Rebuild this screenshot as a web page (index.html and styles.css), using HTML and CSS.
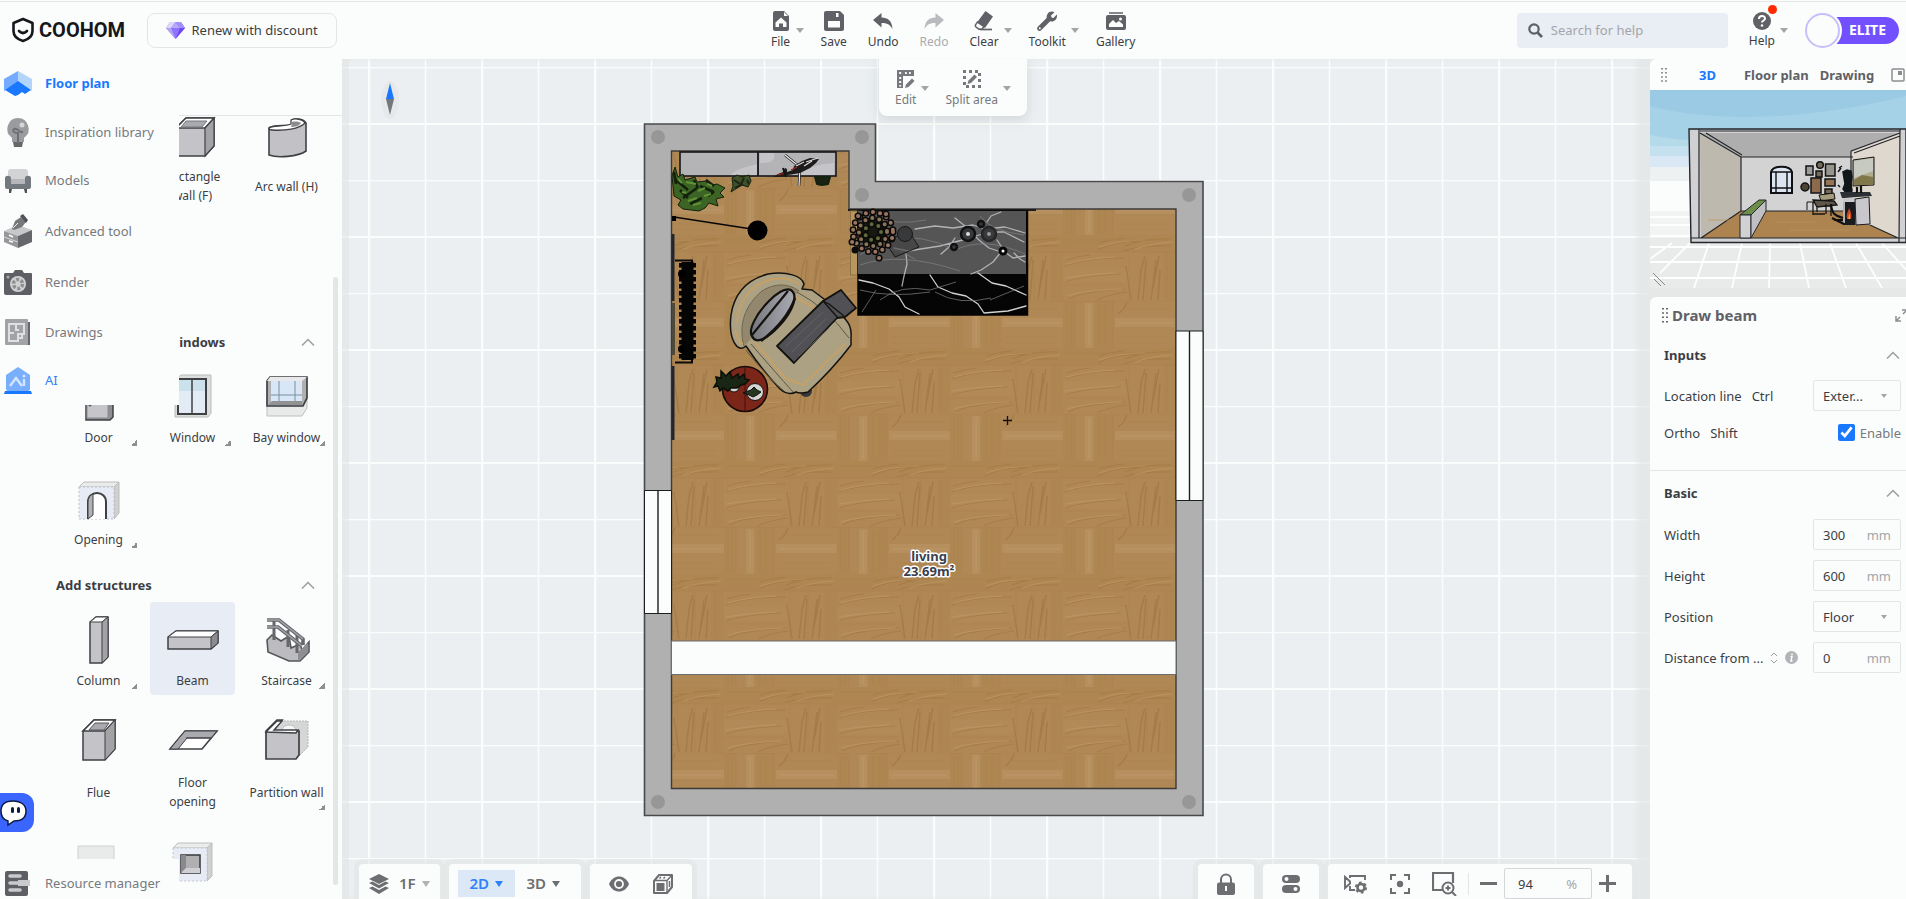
FILE: index.html
```html
<!DOCTYPE html>
<html lang="en">
<head>
<meta charset="utf-8">
<title>Coohom</title>
<link rel="stylesheet" href="styles.css">
</head>
<body>
<div class="app">
  <header class="topbar">
    <div class="topbar-left">
      <a class="brand" href="#">
        <svg width="24" height="26" viewBox="0 0 24 26"><path d="M12 2 L21.500 6 V14 C21.500 19 17 22.500 12 24 C7 22.500 2.500 19 2.500 14 V6 Z" fill="none" stroke="#16171b" stroke-width="2.600" stroke-linejoin="round"/><path d="M8 14 Q12 18 16 14" fill="none" stroke="#16171b" stroke-width="2.600" stroke-linecap="round"/></svg>
        <span>COOHOM</span>
      </a>
      <button class="renew" type="button">
        <svg width="19" height="17" viewBox="0 0 19 17"><path d="M4 0h11l4 6-9.500 11L0 6z" fill="#8f74ff"/><path d="M4 0h5.500L5 6H0z" fill="#dcd9fb"/><path d="M9.500 0L14 6H5z" fill="#b7a8fb"/><path d="M15 0l4 6h-5L9.500 0z" fill="#a48fff"/><path d="M0 6h5l4.500 11z" fill="#b3a5ee"/><path d="M19 6h-5L9.500 17z" fill="#6f45f4"/></svg>
        Renew with discount
      </button>
    </div>
    <nav class="toolbar" aria-label="Main tools">
      <button class="tool has-caret" type="button"><span class="tool-body"><svg width="20" height="20" viewBox="0 0 20 20"><path d="M4 0h9l5 5v13a2 2 0 0 1-2 2H4a2 2 0 0 1-2-2V2a2 2 0 0 1 2-2z" fill="#606167"/><path d="M13 1v4h4z" fill="#fbfdfc"/><path d="M10 6.500l5.500 5V16h-3.500v-3.500H8V16H4.500v-4.500z" fill="#fbfdfc"/></svg><span>File</span></span></button>
      <button class="tool" type="button"><span class="tool-body"><svg width="20" height="20" viewBox="0 0 20 20"><path d="M2 0h14l4 4v14a2 2 0 0 1-2 2H2a2 2 0 0 1-2-2V2a2 2 0 0 1 2-2z" fill="#606167"/><path d="M4 10h12v6.500H4zM12 2h2.500v4H12z" fill="#fbfdfc"/></svg><span>Save</span></span></button>
      <button class="tool" type="button"><span class="tool-body"><svg width="20" height="20" viewBox="0 0 20 20"><path d="M0 9l8.500-7v4.500C15 6.500 19 10 19.500 18 17 13.500 14 12 8.500 12v4.500z" fill="#606167"/></svg><span>Undo</span></span></button>
      <button class="tool" type="button" disabled><span class="tool-body"><svg width="20" height="20" viewBox="0 0 20 20"><path d="M20 9l-8.500-7v4.500C5 6.500 1 10 .500 18 3 13.500 6 12 11.500 12v4.500z" fill="#b9bbc1"/></svg><span>Redo</span></span></button>
      <button class="tool has-caret" type="button"><span class="tool-body"><svg width="20" height="20" viewBox="0 0 20 20"><path d="M11.500 0l7.500 5.500-8 11.500-8-5.500z" fill="#606167"/><path d="M3.500 11l6.500 4.500-2 2.700H5L2 16c-.800-.700-.800-1.500-.300-2.300z" fill="none" stroke="#606167" stroke-width="1.500"/><path d="M6 18.500h12" stroke="#606167" stroke-width="1.700"/></svg><span>Clear</span></span></button>
      <button class="tool has-caret" type="button"><span class="tool-body"><svg width="20" height="20" viewBox="0 0 20 20"><path d="M2.500 17.500L12 8" stroke="#606167" stroke-width="4.600" stroke-linecap="round"/><path d="M17.500 1.200L14 4.500l.500 2 2 .500 3.300-3.500c1 4-2 7.500-5.800 7C10 10 8.500 6 10.500 3 12 .500 15 0 17.500 1.200z" fill="#606167"/><circle cx="2.800" cy="17.200" r="1" fill="#fbfdfc"/></svg><span>Toolkit</span></span></button>
      <button class="tool" type="button"><span class="tool-body"><svg width="20" height="20" viewBox="0 0 20 20"><path d="M3 2h14" stroke="#606167" stroke-width="1.500"/><rect y="4" width="20" height="15" rx="2" fill="#606167"/><path d="M3 16v-3l4-4 3 3 3-2 4 3.500V16z" fill="#fbfdfc"/><circle cx="14.500" cy="8" r="1.500" fill="#fbfdfc"/></svg><span>Gallery</span></span></button>
      <div class="subtools">
        <button class="tool has-caret" type="button"><span class="tool-body"><svg width="20" height="20" viewBox="0 0 20 20"><path d="M1 1h17v6H7v12H1z" fill="#77787d"/><path d="M9 3h1.800v2H9zM13 3h1.800v2H13zM3.200 3h2v2h-2zM3.200 8h2v2h-2zM3.200 12h2v2h-2zM3.200 16h2v1.500h-2z" fill="#fbfdfc"/><path d="M9 19l1-3.500 6-6 2.500 2.500-6 6z" fill="#77787d"/></svg><span>Edit</span></span></button>
        <button class="tool has-caret" type="button"><span class="tool-body"><svg width="20" height="20" viewBox="0 0 20 20"><rect x="2.500" y="2.500" width="15" height="15" fill="none" stroke="#77787d" stroke-width="3" stroke-dasharray="3 3" stroke-dashoffset="1.500"/><path d="M5.500 15l1-3.500 6-6L15 8l-6 6z" fill="#77787d"/></svg><span>Split area</span></span></button>
      </div>
    </nav>
    <div class="topbar-right">
      <label class="search">
        <svg width="15" height="15" viewBox="0 0 15 15"><circle cx="6" cy="6" r="4.700" fill="none" stroke="#5f6067" stroke-width="2.200"/><path d="M9.500 9.500L14 14" stroke="#5f6067" stroke-width="2.600"/></svg>
        <input type="search" placeholder="Search for help" aria-label="Search for help">
      </label>
      <button class="tool has-caret help" type="button"><span class="tool-body"><svg width="20" height="20" viewBox="0 0 20 20"><circle cx="10" cy="11" r="9" fill="#606167"/><path d="M7 9c0-4 6-4 6-.500 0 2-3 2-3 4" fill="none" stroke="#fff" stroke-width="2"/><circle cx="10" cy="15.500" r="1.200" fill="#fff"/></svg><span>Help</span></span><i class="dot"></i></button>
      <a class="account" href="#"><span class="avatar"></span><span class="plan-badge">ELITE</span></a>
    </div>
  </header>

  <main class="workspace">
    <aside class="sidebar">
      <div class="palette-head"></div>
      <div class="palette">
        <section class="group group-walls">
          <div class="tiles">
            <button class="tile slot-2" type="button"><svg width="60" height="48" viewBox="0 -1 60 48"><path d="M13 15L23 5h28v28l-9 10H13z" fill="#c4c4c8" stroke="#3f4044" stroke-width="1.500"/><path d="M13 15L23 5h28l-9 10z" fill="#fff" stroke="#3f4044" stroke-width="1.500"/><path d="M18 14l5-6h21l-5 6z" fill="#a9a9af" stroke="#77787d"/><path d="M42 15l9-10v28l-9 10z" fill="#a3a3a6" stroke="#3f4044" stroke-width="1.200"/></svg><span>Rectangle wall (F)</span></button>
            <button class="tile slot-3" type="button"><svg width="60" height="48" viewBox="0 -2 60 48"><path d="M12 14c2-3 15-2 23-3V6c4-2 12-1 14 3v28c-8 6-29 7-37 4z" fill="#c2c2c6" stroke="#3f4044" stroke-width="1.600"/><path d="M12 14c2-3 15-1 22-4V6c4-2 12-1 14 3-6 6-20 8-33 7-2 0-3-1-3-2z" fill="#fff" stroke="#3f4044" stroke-width="1.300"/><path d="M35 10v-2c4-1 8 0 9 1-2 3-6 4-10 4z" fill="#8b8b90"/></svg><span>Arc wall (H)</span></button>
          </div>
        </section>
        <section class="group">
          <h2 class="shifted">windows<svg width="14" height="8" viewBox="0 0 14 8"><path d="M1 7.500L7 1.500l6 6" fill="none" stroke="#9d9ea1" stroke-width="1.500"/></svg></h2>
          <div class="tiles">
            <button class="tile more" type="button"><svg width="60" height="48" viewBox="0 -5 60 48"><path d="M17 4h27v35l-3 3H17z" fill="#8f8f93" stroke="#3f4044" stroke-width="1.500"/><rect x="18" y="6" width="21" height="34" fill="#c6c6ca" stroke="#8b8c90"/><circle cx="21" cy="27" r="1.500" fill="#55565a"/></svg><span>Door</span></button>
            <button class="tile more" type="button"><svg width="60" height="48" viewBox="0 -5 60 48"><path d="M12 2l6-5h30v38l-3 4H12z" fill="#dcdddd" stroke="#b9b9bb"/><rect x="15" y="1" width="28" height="35" fill="#cbe2ec" stroke="#3f4044" stroke-width="2"/><path d="M16 13h26v22H16z" fill="#e3ebf4"/><path d="M29 1v35" stroke="#3f4044" stroke-width="1.500"/></svg><span>Window</span></button>
            <button class="tile more" type="button"><svg width="60" height="48" viewBox="0 -5 60 48"><path d="M10 28h34l6-8v10l-5 8H10z" fill="#e8e9e9" stroke="#bebebf"/><path d="M10 3l3-4h37v21l-4 8H10z" fill="#b0b0b3" stroke="#3f4044" stroke-width="1.700"/><path d="M10 3l3-4h37l-5 4z" fill="#e8e8ea"/><rect x="14" y="3" width="31" height="21" fill="#d9e6f5"/><path d="M22 3v21M38 3v21M14 17h31" stroke="#7591a0"/><path d="M11 27l4-4h30v4z" fill="#929295"/></svg><span>Bay window</span></button>
            <button class="tile more" type="button"><svg width="60" height="48" viewBox="0 -4 60 48"><path d="M10 8l5-5h35l-5 5z" fill="#eaebeb" stroke="#bcbcbd"/><path d="M45 8l5-5v31l-5 6z" fill="#cfd0d1" stroke="#bcbcbd"/><rect x="10" y="8" width="35" height="32" fill="#e7ebf5" stroke="#bcc0c4" stroke-dasharray="2 2"/><path d="M19 40V23c0-12 18-12 18 0v17" fill="#fff" stroke="#3f4044" stroke-width="2"/><path d="M19 40V23c0-4 2-7 5-8v21z" fill="#b2b2b4" stroke="#3f4044"/></svg><span>Opening</span></button>
          </div>
        </section>
        <section class="group">
          <h2>Add structures<svg width="14" height="8" viewBox="0 0 14 8"><path d="M1 7.500L7 1.500l6 6" fill="none" stroke="#9d9ea1" stroke-width="1.500"/></svg></h2>
          <div class="tiles">
            <button class="tile more" type="button"><svg width="60" height="48" viewBox="0 0 60 48"><path d="M21 6l6-5h12v40l-6 6H21z" fill="#c4c4c8" stroke="#3f4044" stroke-width="1.500"/><path d="M21 6l6-5h12l-6 5z" fill="#fff" stroke="#3f4044"/><path d="M33 6l6-5v40l-6 6z" fill="#a3a3a6" stroke="#3f4044"/></svg><span>Column</span></button>
            <button class="tile selected" type="button"><svg width="60" height="48" viewBox="0 0 60 48"><path d="M5 21l8-6h42v12l-7 6H5z" fill="#c4c4c8" stroke="#3f4044" stroke-width="1.500"/><path d="M5 21l8-6h42l-7 6z" fill="#fff" stroke="#3f4044"/><path d="M48 21l7-6v12l-7 6z" fill="#8c8c90" stroke="#3f4044"/></svg><span>Beam</span></button>
            <button class="tile more" type="button"><svg width="60" height="48" viewBox="0 0 60 48"><path d="M10 24l5-5 9 6 8-5 2 12 9-4 2 6 7-8v10l-9 9H32L11 36z" fill="#bcbcc0" stroke="#55565a" stroke-width="1.600"/><path d="M41 45l10-9V27l-10 9z" fill="#8e8e92"/><path d="M17 4v20M40 19v18M31 14v17" stroke="#66676b" stroke-width="3"/><path d="M10 4h12l24 19v6M10 11h11l24 19" fill="none" stroke="#66676b" stroke-width="3.600"/><path d="M10 4h12l24 19M10 11h11l24 19" fill="none" stroke="#a5a5a9" stroke-width="1.400"/></svg><span>Staircase</span></button>
            <button class="tile" type="button"><svg width="60" height="48" viewBox="0 -1 60 48"><path d="M14 12L25 1h21v29L36 41H14z" fill="#c4c4c8" stroke="#3f4044" stroke-width="1.500"/><path d="M14 12L25 1h21L36 12z" fill="#fff" stroke="#3f4044" stroke-width="1.500"/><path d="M20 11l6-7h14l-5 7z" fill="#a9a9af" stroke="#55565a"/><path d="M36 12L46 1v29L36 41z" fill="#a3a3a6" stroke="#3f4044"/></svg><span>Flue</span></button>
            <button class="tile" type="button"><svg width="60" height="48" viewBox="0 -1 60 48"><path d="M7 30L22 12h32L39 30z" fill="#fff" stroke="#3f4044" stroke-width="1.600"/><path d="M22 12h32l-6 7H24l-9 11H7z" fill="#a9a9af" stroke="#3f4044"/><path d="M23 19h26" stroke="#3f4044"/></svg><span>Floor opening</span></button>
            <button class="tile more" type="button"><svg width="60" height="48" viewBox="0 -1 60 48"><path d="M24 2h27v26l-9 9V12H18z" fill="#d5d6d6" stroke="#b6b6b8" stroke-dasharray="2 1"/><path d="M25 12c0-8 14-8 14 0" fill="#f4f5f5" stroke="#bbb"/><path d="M9 12L20 1h5l-9 11h26v24l-3 4H9z" fill="#c4c4c8" stroke="#3f4044" stroke-width="1.700"/><path d="M9 13L20 2h5l-8 9h24l-2 3z" fill="#fff" stroke="#3f4044" stroke-width="1.400"/></svg><span>Partition wall</span></button>
            <button class="tile" type="button" aria-label="Niche"><svg width="60" height="48" viewBox="0 6 60 48"><rect x="9" y="13" width="36" height="26" fill="#e9ebeb" stroke="#cfd0d0"/></svg></button>
            <button class="tile" type="button" aria-label="Wall niche"><svg width="60" height="48" viewBox="0 5 60 48"><path d="M10 14l5-5h34l-5 5z" fill="#eaebeb" stroke="#bcbcbd"/><path d="M44 14l5-5v33l-5 5z" fill="#cfd0d1" stroke="#bcbcbd"/><rect x="10" y="14" width="34" height="33" fill="#e7ebf5" stroke="#c4c8cc" stroke-dasharray="2 2"/><rect x="18" y="21" width="19" height="18" fill="#b0b0b2" stroke="#3f4044" stroke-width="1.600"/><path d="M18 21l5 0v13l-5 5z" fill="#8a8a8e"/><path d="M18 39l5-5h14v5z" fill="#cfcfd3"/></svg></button>
          </div>
        </section>
      </div>
      <i class="scrollbar"></i>
      <nav class="menu" aria-label="Modules">
        <a class="active" href="#"><svg width="28" height="28" viewBox="0 0 28 28"><path d="M0 10L14 2v12L0 22z" fill="#73acff"/><path d="M28 10L14 2v12l14 8z" fill="#b3d5fb"/><path d="M1 21l13-9 13 9-6 4-3-2-4 3-3 1z" fill="#1a78ff"/></svg>Floor plan</a>
        <a href="#"><svg width="28" height="30" viewBox="0 0 28 30"><path d="M9 25h10l-1 5h-8z" fill="#66676b"/><path d="M14 1a11 11 0 0 1 6 20v4H8v-4A11 11 0 0 1 14 1z" fill="#9a9b9e"/><path d="M14 26V16c-6 0-6-5-2-4 3 0 2 4 7 3" fill="none" stroke="#6e6f73" stroke-width="2"/><circle cx="18" cy="8" r="2.500" fill="#d5d6d7"/></svg>Inspiration library</a>
        <a href="#"><svg width="28" height="28" viewBox="0 0 28 28"><rect x="4" y="3" width="20" height="14" rx="3" fill="#d2d3d5"/><path d="M1 12c0-3 6-3 6 0v5h14v-5c0-3 6-3 6 0v9a2 2 0 0 1-2 2H3a2 2 0 0 1-2-2z" fill="#747980"/><path d="M7 13h14v5H7z" fill="#b4b7bb"/><path d="M5 23h3l-1 4H5zM20 23h3v4h-2z" fill="#4f5156"/></svg>Models</a>
        <a href="#"><svg width="28" height="34" viewBox="0 0 28 34"><path d="M0 17l14-6 14 5-14 6z" fill="#c7c8ca"/><path d="M0 17l14 5v12L0 28z" fill="#96979a"/><path d="M28 16l-14 6v12l14-6z" fill="#66676b"/><path d="M0 23l14 5" stroke="#d4d5d6"/><path d="M5 21l4 2M5 27l4 1" stroke="#fff" stroke-width="1.500"/><path d="M8 15l3-8 6-4 5 5-4 5-8 3z" fill="#77787c"/><path d="M16 2l3-2 5 6-2 3z" fill="#505156"/><path d="M9 14l5-5" stroke="#eee"/></svg>Advanced tool</a>
        <a href="#"><svg width="28" height="28" viewBox="0 0 28 28"><path d="M1 5h8l2-3h7l2 3h7a1 1 0 0 1 1 1v19a2 2 0 0 1-2 2H2a2 2 0 0 1-2-2V6z" fill="#5e5f64"/><circle cx="14" cy="16" r="8" fill="#d0d1d2"/><circle cx="14" cy="16" r="4.500" fill="none" stroke="#8e8f92" stroke-width="3.500" stroke-dasharray="3 1.700"/><circle cx="4" cy="9" r="1.500" fill="#aaa"/></svg>Render</a>
        <a href="#"><svg width="28" height="28" viewBox="0 0 28 28"><path d="M4 4h22v23H4z" fill="#66676b"/><rect x="1" y="1" width="23" height="26" rx="1" fill="#a2a3a6"/><path d="M5 6h15v10h-6v7H5zM5 15h5M12 6v6h3M14 20h4v-4" fill="none" stroke="#dfe0e1" stroke-width="2"/></svg>Drawings</a>
        <a class="accent" href="#"><svg width="28" height="28" viewBox="0 0 28 28"><path d="M2 9L14 1l12 8v14a2 2 0 0 1-2 2H4a2 2 0 0 1-2-2z" fill="#78aefc"/><path d="M1 25h26l1 3H0z" fill="#1a78ff"/><path d="M6 20l6-8 6 8M20 13v7" fill="none" stroke="#d4e6fd" stroke-width="2.400"/><circle cx="20" cy="10" r="1.500" fill="#d4e6fd"/></svg>AI</a>
      </nav>
      <a class="resource" href="#"><svg width="28" height="26" viewBox="0 0 28 26"><rect x="1" y="1" width="23" height="25" rx="2" fill="#5e5f64"/><path d="M6 6h10M6 13h16M6 20h10" stroke="#c9cacc" stroke-width="3.500" stroke-linecap="round"/><path d="M14 10h12v6H14z" fill="#c9cacc"/></svg>Resource manager</a>
      <button class="chat" type="button" aria-label="Chat"><svg width="34" height="39" viewBox="0 0 34 39"><path d="M13 8C5 8 1 12 1 18s3 9 7 10v4l6-4c8 0 12-4 12-10S21 8 13 8z" fill="#fff" stroke="#0e1b44" stroke-width="1.500"/><rect x="11" y="14" width="3" height="6" rx="1.500" fill="#0e1b44"/><rect x="17" y="14" width="3" height="6" rx="1.500" fill="#0e1b44"/></svg></button>
    </aside>

    <section class="canvas" aria-label="Floor plan canvas">
      <svg class="stage" viewBox="342 59 1308 840" preserveAspectRatio="xMinYMin slice">
        <defs>
          <pattern id="grid" x="368" y="67" width="113" height="113" patternUnits="userSpaceOnUse">
            <path d="M0 .500H113M57.500 0V113" stroke="#fbfdfc" stroke-width="1.500"/><path d="M0 57H113" stroke="#fbfdfc" stroke-width="2"/><path d="M1 0V113" stroke="#fbfdfc" stroke-width="2.500"/>
          </pattern>
          <pattern id="wood" x="724" y="527" width="113" height="113" patternUnits="userSpaceOnUse">
            <rect width="113" height="113" fill="#b08855"/>
            <path d="M0 0h12v47H0zM32 0h18v47H32zM0 47h113v17H0zM100 64h13v49h-13z" fill="#ae8652"/>
            <path d="M22 2h8v45h-8zM52 17h61v9H52z" fill="#b58f5e"/>
            <path d="M0 80h66v14H0z" fill="#b18a57"/>
            <g opacity=".4" fill="none">
            <path d="M0 .500h113M50 0v47M12 0v47M0 64h113M66 64v49M84 64v49M0 97h60" stroke="#a67d49" stroke-width=".800"/>
            <path d="M35 62q14-8 40-9M62 58q18-8 46-7M36 55q12-4 26-5M60 63q18-6 48-5M2 78q22-8 60-8M3 72q12-4 24-5M2 94q18-6 56-8M5 111q14-7 32-8M34 112q12-6 30-8M20 106q20-4 42-5" stroke="#976c35" stroke-width="1.200"/>
            <path d="M36 59q20-7 46-7M72 61q18-6 38-7M4 76q20-6 48-7M4 108q20-6 55-7M2 90q24-4 50-5M56 22h54M26 4v40" stroke="#c7a374" stroke-width="1.200"/>
            <path d="M68 112l-5-34M75 112l3-30 4-14M80 112l3-40M88 112l5-40M95 112l2-30M90 100l6-32M55 13q6-4 9-12" stroke="#936830" stroke-width="1.500"/>
            <path d="M4 2v44M8 4v40M36 3v42M42 3v40M104 66v44M56 36h50M54 42h50M60 8h48M2 52h104" stroke="#a2773f" stroke-width=".800"/>
            </g>
          </pattern>
          <linearGradient id="pillow" x1="0" x2="1"><stop offset="0" stop-color="#77787d"/><stop offset="1" stop-color="#aaabb2"/></linearGradient>
        </defs>
        <rect x="342" y="59" width="1308" height="840" fill="#ebeff1"/>
        <rect x="342" y="59" width="1308" height="840" fill="url(#grid)"/>
        <ellipse cx="390" cy="100" rx="9" ry="19" fill="#e6e9ea"/><path d="M390 83l4 16h-8z" fill="#1a78ff"/><path d="M390 115l4-16h-8z" fill="#74777c"/>

        <path d="M644.500 124H875.500V181.500H1203V815.500H644.500z" fill="#b0b0b0" stroke="#47494c" stroke-width="1.600"/>
        <path d="M671.500 151H849V209H1176V788.500H671.500z" fill="url(#wood)" stroke="#3d3b38" stroke-width="1.400"/>
        <rect x="671.500" y="641" width="504.500" height="33.500" fill="#fbfdfc" stroke="#6c6d6f"/>
        <g fill="#fbfdfc" stroke="#1c1d1f"><path d="M644.500 490.500h27v123h-27zM1176 331h27v169.500h-27z"/><path d="M658 490.500v123M1189.500 331v169.500" stroke-width="1.400"/></g>
        <g fill="#979797"><circle cx="658" cy="137" r="7"/><circle cx="862" cy="137" r="7"/><circle cx="862" cy="195" r="7"/><circle cx="1189" cy="195" r="7"/><circle cx="658" cy="802" r="7"/><circle cx="1189" cy="802" r="7"/></g>

        <g class="cabinet"><rect x="680" y="152" width="156" height="24" fill="#b4b4b6" stroke="#15161a" stroke-width="1.600"/><path d="M758 152v24" stroke="#15161a" stroke-width="1.800"/><path d="M730 175c10-8 18-8 27-11v11zM760 153h14c2 10-6 10-14 10zM800 175c8-8 18-11 34-12v12z" fill="#c5c5c9"/>
          <path d="M785 155l15 12-1 19" fill="none" stroke="#17181a" stroke-width="2.600"/><path d="M785 155l15 12-1 19" fill="none" stroke="#eee" stroke-width="1.200"/>
          <path d="M773 177l5-3 5-2 2-4 2 1v3l6-2 1-4 8-5 8-3 9 1-3 4-6 5-10 5-12 2-7 2z" fill="#1d1b1c"/><path d="M796 166l8-4M806 162l12-4M804 166l8-5" stroke="#d9d9d9" stroke-width="1.200"/><path d="M778 175l7-2M791 170l6-3" stroke="#a3261c" stroke-width="1.300"/><path d="M783 168l3 9" stroke="#111" stroke-width="2"/></g>
        <g stroke="#14210f" stroke-width="1">
          <path d="M672 176l3-9 3 10 5-3 2 6 10-3 2 5 9-1 3 5 8-2 8 4-5 5 4 4-8 2 2 7-9-3-4 5-6 3-16-2-5-4 3-5-7-4z" fill="#3c6424"/>
          <path d="M676 180l12 10M683 198l14-10M700 186l14 6M690 204l12-6M680 190l8 8M706 180l8 6M674 172l2 12M694 180l4 8M708 196l6-4" stroke="#13200e" stroke-width="2.600"/>
          <path d="M686 182l10 2M688 201l9-3M704 196l7-2M693 205l8-2M678 179l4 4M698 191l7-3M682 192l4 1M707 184l5 2" stroke="#5f9334" stroke-width="2.200"/>
          <path d="M732 178l5-3 5 2 7-2 2 6-3 6-6-2-5 3-6 4 2-6z" fill="#41512c"/><path d="M734 180l6 4M744 178l-3 6M735 188l8-4M747 180l2 4" stroke="#1c2714" stroke-width="2"/><path d="M815 177h15l-2 7-6 1-5-1z" fill="#1a2214" stroke-width="2" stroke-linejoin="round"/>
        </g>
        <path d="M674 217l84 13" stroke="#070707" stroke-width="1.700"/><path d="M672 216h4v5h-4z"/><circle cx="757.500" cy="230.500" r="10"/>
        <path d="M673 234v67M673 366v74" stroke="#25262c" stroke-width="3"/><path d="M673.500 303v52" stroke="#4d4a3c" stroke-width="3"/>
        <g><path d="M675 260.500h17v4M675 362.500h17v-4" fill="none" stroke="#0a0a0a" stroke-width="2"/><path d="M687.500 262v98" stroke="#050505" stroke-width="12"/><path d="M687.500 263v97" stroke="#050505" stroke-width="17" stroke-dasharray="4.500 2.500"/><circle cx="682" cy="274" r="4"/><circle cx="682" cy="349" r="4"/></g>

        <g class="marble">
          <path d="M848 209h188v2H848z" fill="#1b1c1e"/>
          <rect x="850.500" y="211" width="10" height="64" fill="#b9965f" stroke="#8d703f"/>
          <rect x="858" y="211" width="169.500" height="104" fill="#050505" stroke="#050505" stroke-width="1.500"/>
          <rect x="858" y="211" width="168" height="63" fill="#555556"/>
          <g fill="none" stroke="#d2d2d4" stroke-linecap="round" stroke-linejoin="round"><path d="M894 248l14 3 32-5 30-8 18-6 16 0 20 10M906 254l1 10-3 12-2 10M915 229l20-3 18 2 20-3 12 4 20-2 20 6M955 218l10 8 14 14 10 8 12 4-8 10-12 8-10 4M941 254l8-7 6-9M1014 253l6 6 5 3M987 222l4-6 10-4M997 240l8 12 8 6 12-2" stroke-width="1.300" opacity=".75"/><path d="M859 280l14 3 16 6 10 8 6 10 14 7M930 275l8 12 14 6 14 3 12 8 6 9 24-2 18-5M978 273l14 10 14 3 20 9" stroke-width="1.300"/></g>
          <path d="M860 255q20-16 55 4M885 238q40-4 70 12 30-14 70 4M860 265q40-14 100 6M980 216q10 15 44 19M935 292q24 14 56 6M880 300q20-16 50-10l26-8M860 290q30 8 70 2M862 312l14-22M990 300l34-14M866 216q30 10 60 4" fill="none" stroke="#828285" stroke-width=".700"/>
          <g fill="#38393a" stroke="#101113" stroke-width="2.500"><circle cx="968" cy="234" r="7"/><circle cx="989" cy="234" r="7" stroke="#252628"/><circle cx="954" cy="247" r="3"/><circle cx="981" cy="224" r="3"/></g><circle cx="968" cy="234" r="2" fill="#ddd"/><circle cx="989" cy="234" r="2" fill="#999"/><circle cx="1003" cy="251" r="3" fill="#fff" stroke="#070707" stroke-width="3"/>
          <path d="M884 240l26-7 9 14-24 10z" fill="#3d3e3f" fill-opacity=".6" stroke="#171717"/><circle cx="905" cy="234" r="7.500" fill="#38393a" stroke="#171717"/>
        </g>
        <g fill="none" stroke-linecap="round">
          <circle cx="873" cy="232" r="14" fill="#161811"/>
          <g stroke="#0c0b09" stroke-width="7" stroke-dasharray="0 7.200"><circle cx="873" cy="232" r="20"/><circle cx="873" cy="232" r="14"/><circle cx="873" cy="232" r="8"/></g>
          <g stroke-dasharray="0 7.200"><circle cx="873" cy="232" r="20" stroke="#9b7763" stroke-width="4"/><circle cx="873" cy="232" r="14" stroke="#8b765a" stroke-width="4"/><circle cx="873" cy="232" r="8" stroke="#5d6b3d" stroke-width="4"/></g>
          <path d="M852 242h.100M879 258h.100M855 250h.100M892 238h.100M858 216h.100M886 214h.100" stroke="#0c0b09" stroke-width="7"/><path d="M852 242h.100M879 258h.100M892 238h.100M858 216h.100M886 214h.100" stroke="#9b7763" stroke-width="4"/>
        </g>

        <g class="armchair" stroke="#14130f" stroke-width="1.500" stroke-linejoin="round">
          <circle cx="806" cy="391" r="6" fill="#36373b" stroke="none"/>
          <path d="M746 346C738 354 728 340 731 315C734 295 745 280 768 274C787 271 802 276 804 284L802 289L812 290L836 308L846 320Q852 327 851 337V345Q832 370 808 392Q800 394 796 392Q788 396 780 389Q762 370 746 346z" fill="#aca283"/>
          <path d="M744 346C738 325 745 305 762 291C776 282 790 284 799 291" fill="#857b62" fill-opacity=".65" stroke="#6f6650" stroke-width="1"/>
          <path d="M751 344q24 28 42 48M746 350q22 28 38 41M797 292q30 16 52 46" fill="none" stroke="#5f563e" stroke-width="1"/>
          <path d="M737 322c2-24 16-38 36-43 14-2 22 2 26 5M755 342l30 36 18 7 42-41M795 297l22 12M735 330c2 8 4 12 8 14" fill="none" stroke="#cda05d" stroke-width="1.500"/>
          <path d="M752 336C748 330 756 314 769 301C778 292 786 288 791 290C799 296 792 312 780 325C769 337 756 346 752 336z" fill="url(#pillow)" stroke-width="2.200"/><path d="M752 335L788 291" stroke-width="2.200"/><path d="M761 341C778 328 790 312 795 298" fill="none" stroke-width="2.500"/>
          <path d="M777 346L823 301 841 290 856 308 845 317 837 318 794 363z" fill="#515055" stroke-width="1.800"/><path d="M823 301l15 17M841 290l-18 11 6 3 15 12" fill="none" stroke-width="1.300"/><path d="M786 346l37-34M792 352l34-33M799 356l30-28" stroke="#68676c" stroke-width=".800"/>
        </g>
        <g><circle cx="745" cy="389" r="22.500" fill="#7c2519" stroke="#190c08" stroke-width="1.600"/><path d="M745 367v44" stroke="#42130d"/><circle cx="755" cy="392" r="8.500" fill="#d5d6d4" stroke="#151515"/><circle cx="734" cy="387" r="5" fill="#d5d6d4" stroke="#151515"/><path d="M743 393l8-3 3-3 3 3 4 2-4 3-4 2-4-2z" fill="#25371e" stroke="#111"/><path d="M716 377l5 1 0-7 5 5 4-4 2 6 6-4 1 4 5-4 1 5 4 1-4 4-4 1-4 3-6 0-3 3-5-3-3 3-2-5-4 1 3-5z" fill="#1a2615" stroke="#0a0e08" stroke-width="1.500"/></g>

        <path d="M1007.500 416v9M1003 420.500h9" stroke="#111" stroke-width="1.300"/>
        <g class="room-label"><text x="929" y="561">living</text><text x="929" y="576">23.69m²</text></g>
      </svg>

      <footer class="dock">
        <div class="dock-side">
          <div class="bar"><button type="button" class="big"><svg width="20" height="20" viewBox="0 0 20 20"><path d="M10 0l10 5-10 5L0 5z" fill="#6d6e72"/><path d="M0 9l3.500-1.500L10 11l6.500-3.500L20 9l-10 5.500zM0 14l3.500-1.500L10 16l6.500-3.500L20 14l-10 6z" fill="#6d6e72"/></svg>1F<i class="caret light"></i></button></div>
          <div class="bar views"><button type="button" class="big on">2D<i class="caret"></i></button><button type="button" class="big">3D<i class="caret"></i></button></div>
          <div class="bar icons"><button type="button" aria-label="Visibility"><svg width="20" height="20" viewBox="0 0 20 20"><path d="M0 10C4 0 16 0 20 10 16 20 4 20 0 10z" fill="#6d6e72"/><circle cx="10" cy="10" r="4" fill="none" stroke="#fbfdfc" stroke-width="1.800"/></svg></button><button type="button" aria-label="Box view"><svg width="20" height="20" viewBox="0 0 20 20"><path d="M1 7l5-6h13v12l-5 6H1z" fill="none" stroke="#6d6e72" stroke-width="2" stroke-linejoin="round"/><path d="M1 6.500h13V19M14 6.500L19 1" fill="none" stroke="#6d6e72" stroke-width="1.400"/><path d="M3.500 9h8v8h-8z" fill="#6d6e72"/><path d="M8 3l-1.500 1.500M12 3l-1.500 1.500M16.500 7v6" stroke="#6d6e72" stroke-width="1.500"/></svg></button></div>
        </div>
        <div class="dock-side">
          <div class="bar icons"><button type="button" aria-label="Lock"><svg width="18" height="22" viewBox="0 0 18 22"><path d="M4 10V6.500a5 5 0 0 1 10 0V10" fill="none" stroke="#6d6e72" stroke-width="2"/><rect y="9.500" width="18" height="12.500" rx="2" fill="#6d6e72"/><path d="M9 13v5" stroke="#fbfdfc" stroke-width="2"/></svg></button></div>
          <div class="bar icons"><button type="button" aria-label="Display switches"><svg width="18" height="20" viewBox="0 0 18 20"><rect y="1" width="18" height="8" rx="4" fill="#6d6e72"/><rect y="11" width="18" height="8" rx="4" fill="#6d6e72"/><circle cx="4.500" cy="5" r="2" fill="#fbfdfc"/><circle cx="13.500" cy="15" r="2" fill="#fbfdfc"/></svg></button></div>
          <div class="bar icons zoombar">
            <button type="button" aria-label="Camera settings"><svg width="24" height="20" viewBox="0 0 24 20"><path d="M6 4V2h15v4M6 12v4h5M1 3v11l5-4.500v-2z" fill="none" stroke="#6d6e72" stroke-width="1.900"/><circle cx="17" cy="13.500" r="3.500" fill="none" stroke="#6d6e72" stroke-width="2.600"/><circle cx="17" cy="13.500" r="5.200" fill="none" stroke="#6d6e72" stroke-width="1.800" stroke-dasharray="2.700 2.740"/></svg></button>
            <button type="button" aria-label="Center view"><svg width="20" height="20" viewBox="0 0 20 20"><path d="M1 6V1h5M14 1h5v5M19 14v5h-5M6 19H1v-5" fill="none" stroke="#6d6e72" stroke-width="2"/><circle cx="10" cy="10" r="3.200" fill="#6d6e72"/></svg></button>
            <button type="button" aria-label="Zoom to area"><svg width="25" height="24" viewBox="0 0 25 24"><path d="M11 18H1V1h20v10" fill="none" stroke="#6d6e72" stroke-width="2.200"/><circle cx="16" cy="16" r="5.500" fill="none" stroke="#6d6e72" stroke-width="2"/><path d="M20 20l4 4M13.500 16h5M16 13.500v5" stroke="#6d6e72" stroke-width="2"/></svg></button>
            <i class="rule"></i>
            <button type="button" aria-label="Zoom out"><svg width="17" height="17" viewBox="0 0 17 17"><path d="M0 8.500h17" stroke="#6d6e72" stroke-width="3"/></svg></button>
            <label class="field zoom"><input type="text" value="94" aria-label="Zoom level"><span>%</span></label>
            <button type="button" aria-label="Zoom in"><svg width="17" height="17" viewBox="0 0 17 17"><path d="M0 8.500h17M8.500 0v17" stroke="#6d6e72" stroke-width="3"/></svg></button>
          </div>
        </div>
      </footer>
    </section>

    <aside class="inspector">
      <section class="preview">
        <div class="tabs">
          <svg class="grip" width="6" height="14" viewBox="0 0 6 14"><path d="M1 0v14M5 0v14" stroke="#66676b" stroke-width="1.500" stroke-dasharray="1.500 2.600"/></svg>
          <button class="tab current" type="button">3D</button><button class="tab" type="button">Floor plan</button><button class="tab" type="button">Drawing</button>
          <svg class="pip" width="14" height="14" viewBox="0 0 14 14"><rect x="1" y="1" width="12" height="12" rx="1" fill="none" stroke="#8b8c90" stroke-width="1.500"/><path d="M7 3h4v4H7z" fill="#8b8c90"/></svg>
        </div>
        <svg class="scene" viewBox="1650 90 256 198" preserveAspectRatio="xMidYMid slice" role="img" aria-label="3D view of the room">
          <rect x="1650" y="90" width="256" height="198" fill="#f5f8f8"/>
          <path d="M1650 90h256v60h-256z" fill="#9acae4"/><path d="M1650 106c60 16 150 16 256-10v80h-256z" fill="#a6d2e8"/><path d="M1650 135c20 4 30 5 50 5h206v40h-256z" fill="#b5dae9"/><path d="M1650 146h256v30h-256z" fill="#c5e1ef"/><path d="M1650 156h256v20h-256z" fill="#dae8f6"/><path d="M1650 167h256v14h-256z" fill="#edf1f1"/>
          <path d="M1650 181h256v107h-256z" fill="#fbfdfc"/><path d="M1650 238h256v50h-256z" fill="#e9eaea"/><path d="M1650 211h256v27h-256z" fill="#f2f4f4"/>
          <path d="M1650 247h256M1650 262h256M1650 278h256M1650 236h60M1650 225h60M1650 217h60M1709 243l-15 45M1742 243l-10 45M1770 243l-1 45M1800 243l9 45M1830 243l16 45M1856 243l26 45M1882 243l36 40M1690 243l-30 30M1672 243l-22 16" stroke="#fdfefe" stroke-width="1.800" fill="none"/>
          <path d="M1653 273l12 12M1654 279l7 7" stroke="#85878a"/>
          <path d="M1689 129h217v113.500h-215z" fill="#d1d1d4" stroke="#23262b" stroke-width="1.400"/>
          <path d="M1700 133h200l-49 24h-110z" fill="#aeaeae"/><path d="M1700 133l41 24v54l-40 27z" fill="#bdb9ae"/><path d="M1741 157h110v54h-110z" fill="#d3d3d4"/>
          <path d="M1741 211h110l47 27h-197z" fill="#ad8350"/><path d="M1851 152l50-19-2 105-29-13-19-14z" fill="#dfd8ce"/>
          <path d="M1699 129v109M1741 157v54M1700 131h200M1741 157h112M1700 133l41 24M1706 133l36 22M1741 211h110M1741 211l-40 27M1851 151l49-18M1854 153l46-17M1900 129l-1 113M1691 238h215M1870 225l28 13M1851 151v60" fill="none" stroke="#23262b" stroke-width="1.200"/>
          <path d="M1708 220h24M1775 222h40M1790 230h60" stroke="#bb955f" stroke-width=".700"/>
          <path d="M1740 215l19-15h7l-15 15z" fill="#6d8e4a" stroke="#23262b"/><path d="M1740 215h11v23h-11z" fill="#d1d1d4" stroke="#23262b"/><path d="M1751 215l15-15v11l-15 27z" fill="#c0c0c4" stroke="#23262b"/>
          <path d="M1771 193v-21c2-7 19-7 21 0v21z" fill="#dce5ef" stroke="#0f1013" stroke-width="2"/><path d="M1771 172h21M1776 172v21M1787 172v21M1771 188h21" stroke="#0f1013" stroke-width="1.400"/>
          <g fill="#746a57" stroke="#131313" stroke-width="1.500"><rect x="1806" y="166" width="7" height="9" fill="#9c9d9b"/><circle cx="1820" cy="165" r="3.300"/><rect x="1825.500" y="164" width="9.500" height="12" fill="#96958c"/><rect x="1816" y="171" width="6" height="6"/><rect x="1811" y="178" width="10" height="15" fill="#8b6b4c"/><rect x="1825" y="179" width="10" height="7" fill="#967352"/><circle cx="1805" cy="187" r="4" fill="#4c4434"/><rect x="1825" y="189" width="7" height="5"/></g>
          <path d="M1853 160l21-3v28l-21 1z" fill="#b0ac8f" stroke="#141414"/><path d="M1854 161l19-3v13l-19 7z" fill="#c7cac1"/><path d="M1854 180l8-5 11 2v8h-19z" fill="#80784a"/>
          <path d="M1839 168l3-2M1838 172l3-4M1838 185l2 2M1843 172l4-2 4 1 1 6-1 6 1 8-6 2-3-4 2-5z" fill="#11161b" stroke="#11161b" stroke-width="1.500"/>
          <path d="M1819 195l15-2 1 6-14 2z" fill="#a59c7d" stroke="#111"/><path d="M1813 200l21 1 3 4-20 2zM1813 202v13M1817 206v6M1831 206v10M1826 204v10M1813 214h12" fill="#5e5749" stroke="#151515" stroke-width="1.300"/><path d="M1807 202h8M1807 202v8" stroke="#151515"/>
          <path d="M1840 192h30l2 4-30 2z" fill="#2c2f34"/><path d="M1843 197h12v28h-12z" fill="#1a1b1e"/><path d="M1843 198l12-1v5h-12z" fill="#c8c8cc"/><path d="M1843 202h2v21h-2z" fill="#b4b4b8"/><path d="M1855 199l14-2 1 27-14 1z" fill="#c8c8cc" stroke="#1a1b1e"/><path d="M1847 219c-1-5 1-7 2-11 2 4 3 7 2 11z" fill="#c9481f"/><path d="M1848.500 219c0-3 .500-4 1-6l.500 6z" fill="#ffb13c"/><path d="M1831 204c1 12 6 12 12 14M1832 218l12 6M1834 220h9M1857 187v6M1861 186v7" fill="none" stroke="#111" stroke-width="2.200"/>
        </svg>
      </section>
      <section class="props">
        <div class="props-title"><svg class="grip" width="6" height="15" viewBox="0 0 6 15"><path d="M1 0v15M5 0v15" stroke="#66676b" stroke-width="2" stroke-dasharray="1.500 2.800"/></svg><h2>Draw beam</h2><svg class="expand" width="13" height="13" viewBox="0 0 13 13"><path d="M1 7v5h5M12 6V1H7M1 12l4-4M12 1L8 5" fill="none" stroke="#8b8c90" stroke-width="1.500"/></svg></div>
        <div class="props-group inputs">
          <h3>Inputs<svg width="14" height="8" viewBox="0 0 14 8"><path d="M1 7.500L7 1.500l6 6" fill="none" stroke="#9d9ea1" stroke-width="1.500"/></svg></h3>
          <div class="row"><label for="line">Location line<kbd>Ctrl</kbd></label><span class="select"><select id="line"><option>Exter...</option></select></span></div>
          <div class="row"><span>Ortho<kbd>Shift</kbd></span><label class="check"><input type="checkbox" checked>Enable</label></div>
        </div>
        <div class="props-group">
          <h3>Basic<svg width="14" height="8" viewBox="0 0 14 8"><path d="M1 7.500L7 1.500l6 6" fill="none" stroke="#9d9ea1" stroke-width="1.500"/></svg></h3>
          <div class="row"><label for="w">Width</label><span class="field"><input id="w" type="text" value="300"><span>mm</span></span></div>
          <div class="row"><label for="h">Height</label><span class="field"><input id="h" type="text" value="600"><span>mm</span></span></div>
          <div class="row"><label for="p">Position</label><span class="select"><select id="p"><option>Floor</option></select></span></div>
          <div class="row"><label for="d" class="distance">Distance from ...<svg width="8" height="12" viewBox="0 0 8 12"><path d="M1 4l3-3 3 3M1 8l3 3 3-3" fill="none" stroke="#9d9ea1"/></svg><svg width="13" height="13" viewBox="0 0 13 13"><circle cx="6.500" cy="6.500" r="6.500" fill="#b3b4b7"/><path d="M7 2.500v1.600M5.500 5.500h1.500l-1 4.500h1.500" fill="none" stroke="#fff" stroke-width="1.400"/></svg></label><span class="field"><input id="d" type="text" value="0"><span>mm</span></span></div>
        </div>
      </section>
    </aside>
  </main>
</div>
</body>
</html>
```
FILE: styles.css
```css
:root {
  --surface: #fbfdfc;
  --line: #e4e6e6;
  --ink: #3b3d45;
  --muted: #77797e;
  --blue: #1a78ff;
}
* { box-sizing: border-box; }
body {
  margin: 0;
  font-family: "Noto Sans", "Open Sans", sans-serif;
  font-size: 13px;
  color: var(--ink);
  background: var(--surface);
}
button { font: inherit; color: inherit; background: none; border: 0; padding: 0; }
a { color: inherit; text-decoration: none; }
svg { display: block; flex: none; }
h2, h3 { margin: 0; font-weight: 700; }
kbd { font: inherit; margin-left: 10px; }
.app { display: flex; flex-direction: column; height: 100vh; overflow: hidden; }

/* top bar */
.topbar {
  display: grid;
  grid-template-columns: 1fr auto 1fr;
  align-items: center;
  height: 59px;
  background: linear-gradient(var(--line), var(--line)) 0 1px / 100% 1px no-repeat var(--surface);
  position: relative;
  z-index: 3;
}
.topbar-left { display: flex; align-items: center; gap: 22px; padding-left: 11px; padding-top: 1px; }
.brand { display: flex; align-items: center; gap: 4px; font: 700 20px/26px Roboto, sans-serif; color: #16171b; }
.renew {
  display: flex; align-items: center; justify-content: center; gap: 6px;
  width: 190px; height: 35px;
  border: 1px solid var(--line); border-radius: 8px;
}
.toolbar { display: flex; align-items: flex-start; gap: 21px; position: relative; padding-top: 2px; }
.tool { display: flex; align-items: center; gap: 5px; font-size: 12px; line-height: 18px; }
.tool-body { display: flex; flex-direction: column; align-items: center; gap: 2px; }
.tool:disabled { color: #a9abb0; }
.has-caret::after, .caret {
  content: "";
  border: 4px solid transparent;
  border-top: 5px solid #a3a4a8;
  border-bottom: 0;
}
.toolbar > .has-caret { margin-right: -4px; }
.subtools {
  position: absolute; top: 50px; left: 50%; transform: translateX(-50%);
  display: flex; gap: 16px;
  height: 57px; padding: 10px 16px 0;
  background: var(--surface);
  border-radius: 0 0 8px 8px;
  box-shadow: 0 4px 12px rgba(120, 125, 130, .2);
  clip-path: inset(0 -20px -20px -20px);
  white-space: nowrap;
  color: var(--muted);
  align-items: flex-start;
}
.topbar-right { display: flex; align-items: center; justify-content: flex-end; padding-right: 7px; padding-top: 1px; }
.search {
  display: flex; align-items: center; gap: 8px;
  width: 211px; height: 35px; padding: 0 11px; margin-right: 21px;
  background: #e9edf4; border-radius: 4px;
}
.search input { width: 100%; border: 0; background: none; font: inherit; color: var(--ink); outline: 0; padding: 0; }
.search input::placeholder { color: #a3a5ab; }
.help { position: relative; margin-right: 17px; }
.dot { position: absolute; top: -5px; left: 19px; width: 9px; height: 9px; border-radius: 50%; background: #ff2a00; }
.account { display: flex; align-items: center; }
.avatar { width: 35px; height: 35px; border: 2px solid #c9bdfb; border-radius: 50%; background: var(--surface); box-shadow: 0 0 0 2px var(--surface); z-index: 1; }
.plan-badge {
  height: 27px; padding: 0 13px; margin-left: -4px;
  font-weight: 700; font-size: 14px; line-height: 26px; color: #fff;
  background: #7350ff; border-radius: 0 14px 14px 0;
}

.workspace { flex: 1; min-height: 0; display: grid; grid-template-columns: 342px 1fr 256px; }

/* left side */
.sidebar {
  position: relative; z-index: 2; overflow: hidden;
  display: flex; flex-direction: column;
  background: var(--surface);
  border-radius: 0 8px 0 0;
}
.palette-head { height: 57px; flex: none; border-bottom: 1px solid var(--line); background: var(--surface); z-index: 1; }
.palette { flex: 1; min-height: 0; overflow: hidden; padding-left: 56px; }
.group { margin-bottom: 21px; }
.group-walls { margin-top: -18px; min-height: 213px; }
.group h2 { display: flex; align-items: center; justify-content: space-between; font-size: 13px; line-height: 20px; margin-bottom: 7px; padding-right: 27px; }
.group .shifted { padding-left: 112px; }
.tiles { display: grid; grid-template-columns: repeat(3, 85px); gap: 9px; }
.tile {
  position: relative;
  display: flex; flex-direction: column; align-items: center;
  padding: 14px 0 5px; border-radius: 4px;
  font-size: 12px; line-height: 19px;
}
.tile span { margin: auto 0; padding: 7px 6px 0; }
.tile.more span { padding: 7px 0 0; }
.slot-2 { grid-column: 2; }
.slot-3 { grid-column: 3; }
.selected { background: #e8ecf4; }
.more::after {
  content: ""; position: absolute; right: 4px; bottom: 6px;
  width: 6px; height: 6px;
  background: linear-gradient(135deg, transparent 50%, #8e8f93 50%);
}
.scrollbar { position: absolute; right: 4px; top: 218px; bottom: 14px; width: 5px; border-radius: 3px; background: #e4e6e6; }
.menu {
  position: absolute; left: 0; top: 0; width: 179px; z-index: 2;
  display: grid; grid-template-rows: 48px 49px 48px 53px 50px 49px 47px;
  padding-bottom: 2px;
  background: var(--surface);
}
.menu a, .resource { display: flex; align-items: center; gap: 13px; padding-left: 4px; color: var(--muted); }
.menu .active { color: var(--blue); font-weight: 700; }
.menu .accent { color: #2f82f8; }
.resource { position: absolute; left: 0; bottom: 0; width: 179px; height: 40px; padding-top: 8px; background: var(--surface); z-index: 2; }
.chat { position: absolute; left: 0; bottom: 67px; width: 34px; height: 39px; border-radius: 0 12px 12px 0; background: #3a66ff; z-index: 3; }

/* drawing area */
.canvas { position: relative; overflow: hidden; background: #ebeff1; }
.canvas::after { content: ""; position: absolute; inset: 0; pointer-events: none; box-shadow: inset 7px 0 0 rgba(225, 227, 226, .5), inset -13px 0 4px rgba(225, 227, 226, .6); }
.stage { width: 100%; height: 100%; }
.room-label { font-size: 13px; font-weight: 700; text-anchor: middle; fill: #39404d; stroke: #fff; stroke-width: 3px; paint-order: stroke; stroke-linejoin: round; }
.dock { position: absolute; left: 17px; right: 18px; bottom: 0; z-index: 1; display: flex; justify-content: space-between; }
.dock-side { display: flex; gap: 9px; }
.bar {
  display: flex; align-items: center; height: 35px; padding: 4px 10px 0;
  background: var(--surface); border-radius: 4px 4px 0 0;
  box-shadow: 0 0 0 5px rgba(225, 227, 226, .5);
  color: #6d6e72;
}
.bar button { display: flex; align-items: center; justify-content: center; }
.bar .big { gap: 6px; font-size: 15px; font-weight: 600; line-height: 27px; }
.big svg { margin-right: 4px; }
.big .caret { border-top: 6px solid #6d6e72; }
.big .caret.light { border-top-color: #b0b1b4; }
.views { padding: 4px 9px 0; }
.views .big { width: 57px; }
.views .on { background: #dce8f6; color: #2d82fa; }
.views .on .caret { border-top-color: #2d82fa; }
.icons { gap: 24px; padding: 4px 19px 0; }
.zoombar { gap: 22px; padding: 4px 16px 0; }
.rule { width: 1px; height: 22px; background: var(--line); margin: 0 -11px; }
.field, .select {
  display: flex; align-items: center;
  width: 88px; height: 31px; padding: 0 9px;
  border: 1px solid var(--line); border-radius: 2px; background: var(--surface);
}
.field input { flex: 1; min-width: 0; border: 0; padding: 0; outline: 0; background: none; font: inherit; color: var(--ink); }
.field span { color: #a3a5aa; }
.zoom { padding: 0 14px 0 13px; margin: 0 -15px; border-color: #d4d6d8; }

/* right side */
.inspector { display: flex; flex-direction: column; gap: 9px; overflow: hidden; background: #e6e8e8; z-index: 1; }
.preview { background: var(--surface); border-radius: 6px 0 0 0; overflow: hidden; }
.tabs { display: flex; align-items: center; height: 31px; padding-left: 11px; white-space: nowrap; }
.tab { font-weight: 700; color: #606167; }
.tab.current { color: var(--blue); margin: 0 28px 0 32px; }
.tab + .tab:not(.current) + .tab { margin-left: 11px; }
.pip { margin-left: 17px; }
.scene { width: 100%; height: auto; }
.props { flex: 1; background: var(--surface); border-radius: 6px 0 0 0; }
.props-title { display: flex; align-items: center; gap: 4px; height: 36px; padding-left: 12px; }
.props-title h2 { font-size: 15px; font-weight: 700; color: #606167; }
.expand { margin-left: auto; margin-right: -2px; }
.props-group { display: flex; flex-direction: column; gap: 10px; padding: 12px 5px 0 14px; }
.props-group h3 { display: flex; align-items: center; justify-content: space-between; font-size: 13px; line-height: 20px; padding-right: 1px; }
.inputs { gap: 6px; padding-bottom: 22px; border-bottom: 1px solid var(--line); }
.inputs h3 { margin-bottom: 9px; }
.props-group h3 + .row { margin-top: 6px; }
.inputs h3 + .row { margin-top: 0; }
.row { display: flex; align-items: center; justify-content: space-between; height: 31px; white-space: nowrap; }
.select { padding: 0; position: relative; }
.select select { appearance: none; width: 100%; height: 100%; border: 0; padding: 0 9px; background: none; font: inherit; color: var(--ink); }
.select::after { content: ""; position: absolute; right: 13px; border: 3px solid transparent; border-top: 4px solid #a3a4a8; border-bottom: 0; }
.check { display: flex; align-items: center; gap: 5px; color: var(--muted); }
.check input { width: 17px; height: 17px; margin: 0; accent-color: var(--blue); }
.distance { display: flex; align-items: center; gap: 7px; }
```
